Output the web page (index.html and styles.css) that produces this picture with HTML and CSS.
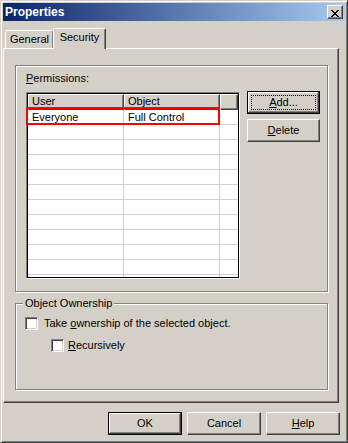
FILE: index.html
```html
<!DOCTYPE html>
<html>
<head>
<meta charset="utf-8">
<title>Properties</title>
<link rel="stylesheet" href="styles.css">
</head>
<body>
<div class="window">
  <div class="titlebar">
    <span class="title">Properties</span>
    <button class="close" aria-label="Close"><svg width="8" height="7" viewBox="0 0 8 7"><path fill="#000" d="M0 0h2v1h-2z M6 0h2v1h-2z M1 1h2v1h-2z M5 1h2v1h-2z M2 2h4v1h-4z M3 3h2v1h-2z M2 4h4v1h-4z M1 5h2v1h-2z M5 5h2v1h-2z M0 6h2v1h-2z M6 6h2v1h-2z"/></svg></button>
  </div>
  <div class="tabs">
    <div class="tab">General</div>
    <div class="tab selected">Security</div>
  </div>
  <div class="panel">
    <div class="group perm">
      <div class="perm-label"><u>P</u>ermissions:</div>
      <div class="perm-row">
        <div class="listview">
          <div class="lv-inner">
            <div class="grid">
              <div class="hdr">User</div><div class="hdr">Object</div><div class="hdr"></div>
              <div class="cell">Everyone</div><div class="cell">Full Control</div><div class="cell"></div>
              <div class="cell"></div><div class="cell"></div><div class="cell"></div>
              <div class="cell"></div><div class="cell"></div><div class="cell"></div>
              <div class="cell"></div><div class="cell"></div><div class="cell"></div>
              <div class="cell"></div><div class="cell"></div><div class="cell"></div>
              <div class="cell"></div><div class="cell"></div><div class="cell"></div>
              <div class="cell"></div><div class="cell"></div><div class="cell"></div>
              <div class="cell"></div><div class="cell"></div><div class="cell"></div>
              <div class="cell"></div><div class="cell"></div><div class="cell"></div>
              <div class="cell"></div><div class="cell"></div><div class="cell"></div>
              <div class="cell"></div><div class="cell"></div><div class="cell"></div>
              <div class="cell"></div><div class="cell"></div><div class="cell"></div>
            </div>
          </div>
          <div class="highlight"></div>
        </div>
        <div class="side">
          <button class="btn side-btn default focused"><span class="focus"><u>A</u>dd...</span></button>
          <button class="btn side-btn"><u>D</u>elete</button>
        </div>
      </div>
    </div>
    <div class="group own">
      <div class="legend">Object Ownership</div>
      <div class="check first"><span class="box"></span><span>Take <u>o</u>wnership of the selected object.</span></div>
      <div class="check sub"><span class="box"></span><span><u>R</u>ecursively</span></div>
    </div>
  </div>
  <div class="buttons">
    <button class="btn default">OK</button>
    <button class="btn">Cancel</button>
    <button class="btn"><u>H</u>elp</button>
  </div>
</div>
</body>
</html>
```
FILE: styles.css
```css
* { box-sizing: border-box; }
html, body { margin: 0; padding: 0; background: #d4d0c8; }
body {
  font-family: "Liberation Sans", Arial, sans-serif;
  font-size: 11px;
  color: #000;
}
u { text-decoration: underline; text-underline-offset: 1px; }

.window {
  width: 348px;
  height: 443px;
  border: 1px solid;
  border-color: #d4d0c8 #404040 #404040 #d4d0c8;
  box-shadow: inset 1px 1px #fff, inset -1px -1px #808080;
  padding: 2px;
  background: #d4d0c8;
  display: flex;
  flex-direction: column;
}

.titlebar {
  height: 18px;
  flex: none;
  display: flex;
  align-items: center;
  justify-content: space-between;
  padding: 0 2px;
  background: linear-gradient(to right, #0a246a, #a6caf0);
}
.title {
  color: #fff;
  font-weight: bold;
  font-size: 12px;
  line-height: 14px;
}
.close {
  width: 16px;
  height: 14px;
  padding: 0;
  margin: 0;
  border: 1px solid;
  border-color: #fff #404040 #404040 #fff;
  box-shadow: inset -1px -1px #808080;
  background: #d4d0c8;
  display: block;
}
.close svg { display: block; margin: 2px 0 0 3px; }

.tabs {
  height: 27px;
  flex: none;
  display: flex;
  align-items: flex-end;
  padding-left: 2px;
  position: relative;
  z-index: 1;
}
.tab {
  width: 49px;
  height: 18px;
  border: 1px solid;
  border-bottom: none;
  border-color: #fff #404040 transparent #fff;
  box-shadow: inset -1px 0 #808080;
  border-radius: 2px 2px 0 0;
  background: #d4d0c8;
  text-align: center;
  padding-top: 2px;
  line-height: 13px;
}
.tab.selected {
  width: 53px;
  height: 21px;
  margin-left: -1px;
  margin-bottom: -1px;
  position: relative;
}

.panel {
  height: 355px;
  flex: none;
  margin-right: 6px;
  border: 1px solid;
  border-color: #fff #404040 #404040 #fff;
  box-shadow: inset -1px -1px #808080;
  padding: 16px 10px 0 11px;
}

.group {
  border: 1px solid #808080;
  box-shadow: inset 1px 1px #fff, 1px 1px #fff;
}
.perm { padding: 6px 0 12px 10px; }
.perm-label { height: 13px; line-height: 13px; }
.perm-row {
  display: flex;
  align-items: flex-start;
  margin-top: 6px;
}

.listview {
  position: relative;
  width: 214px;
  height: 187px;
  margin-top: 1px;
  border: 1px solid;
  border-color: #808080 #fff #fff #808080;
}
.lv-inner {
  height: 100%;
  border: 1px solid #000;
  background: #fff;
  overflow: hidden;
}
.grid {
  display: grid;
  grid-template-columns: 96px 96px 1fr;
  grid-template-rows: 16px;
  grid-auto-rows: 15px;
}
.hdr {
  background: #d4d0c8;
  border: 1px solid;
  border-color: #fff #404040 #404040 #fff;
  box-shadow: inset -1px -1px #808080;
  padding-left: 3px;
  line-height: 13px;
  white-space: nowrap;
}
.cell {
  border-right: 1px solid #d4d0c8;
  border-bottom: 1px solid #d4d0c8;
  padding-left: 4px;
  line-height: 14px;
  white-space: nowrap;
}
.cell:nth-child(3n) { border-right: none; }
.highlight {
  position: absolute;
  left: -1px;
  top: 14px;
  width: 194px;
  height: 18px;
  border: 2px solid #ff0000;
}

.side {
  display: flex;
  flex-direction: column;
  gap: 5px;
  margin-left: 7px;
}

.btn {
  width: 74px;
  height: 23px;
  margin: 0;
  padding: 0;
  font: inherit;
  color: #000;
  line-height: 13px;
  background: #d4d0c8;
  border: 1px solid;
  border-color: #fff #404040 #404040 #fff;
  box-shadow: inset -1px -1px #808080;
  display: flex;
  align-items: center;
  justify-content: center;
}
.side-btn { width: 73px; }
.btn.default {
  border: 1px solid #000;
  box-shadow: inset -1px -1px #404040, inset 1px 1px #fff, inset -2px -2px #808080;
}
.btn.focused { padding: 3px; align-items: stretch; }
.focus {
  flex: 1;
  border: 1px dotted #000;
  display: flex;
  align-items: center;
  justify-content: center;
}

.own {
  margin-top: 11px;
  height: 87px;
  padding-left: 9px;
}
.legend {
  width: fit-content;
  margin: -7px 0 0 -2px;
  padding: 0 2px;
  background: #d4d0c8;
  line-height: 13px;
}
.check {
  display: flex;
  align-items: center;
  height: 13px;
  line-height: 13px;
  white-space: nowrap;
}
.check .box {
  width: 13px;
  height: 13px;
  flex: none;
  margin-right: 6px;
  background: #fff;
  border: 1px solid;
  border-color: #808080 #fff #fff #808080;
  box-shadow: inset 1px 1px #404040, inset -1px -1px #d4d0c8;
}
.check.first { margin-top: 7px; }
.check.sub { margin-top: 9px; margin-left: 26px; }
.check.sub .box { margin-right: 4px; }

.buttons {
  flex: none;
  display: flex;
  justify-content: flex-end;
  gap: 5px;
  margin-top: 9px;
  margin-right: 5px;
}
```
